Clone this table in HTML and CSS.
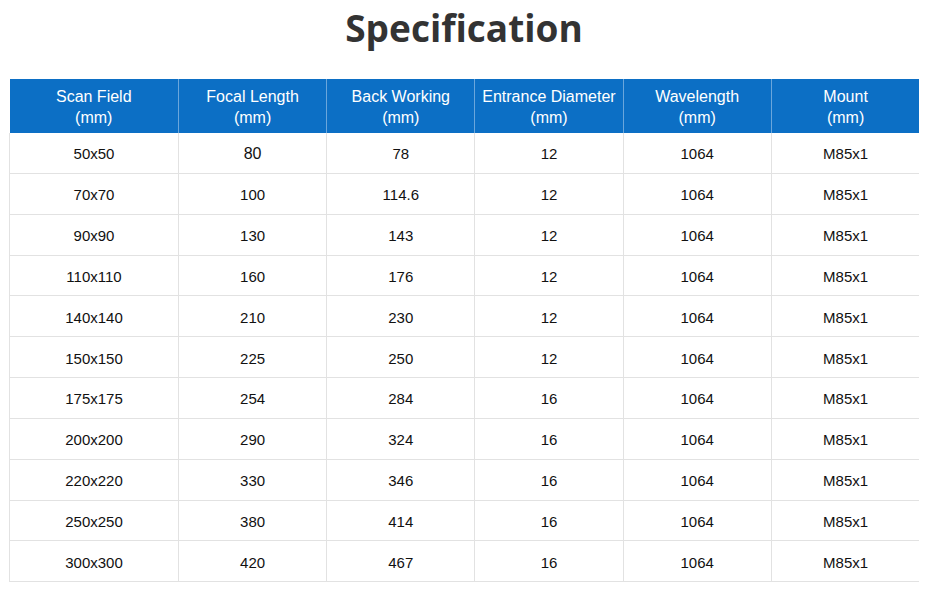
FILE: index.html
```html
<!DOCTYPE html>
<html>
<head>
<meta charset="utf-8">
<link rel="stylesheet" href="styles.css">
</head>
<body>
<div class="page">
  <h1 class="title">Specification</h1>
  <table class="spec">
    <colgroup>
      <col class="c1"><col class="c"><col class="c"><col class="c"><col class="c"><col class="c">
    </colgroup>
    <thead>
      <tr>
        <th>Scan Field<br>(mm)</th>
        <th>Focal Length<br>(mm)</th>
        <th>Back Working<br>(mm)</th>
        <th>Entrance Diameter<br>(mm)</th>
        <th>Wavelength<br>(mm)</th>
        <th>Mount<br>(mm)</th>
      </tr>
    </thead>
    <tbody>
      <tr><td>50x50</td><td class="big">80</td><td>78</td><td>12</td><td>1064</td><td>M85x1</td></tr>
      <tr><td>70x70</td><td>100</td><td>114.6</td><td>12</td><td>1064</td><td>M85x1</td></tr>
      <tr><td>90x90</td><td>130</td><td>143</td><td>12</td><td>1064</td><td>M85x1</td></tr>
      <tr><td>110x110</td><td>160</td><td>176</td><td>12</td><td>1064</td><td>M85x1</td></tr>
      <tr><td>140x140</td><td>210</td><td>230</td><td>12</td><td>1064</td><td>M85x1</td></tr>
      <tr><td>150x150</td><td>225</td><td>250</td><td>12</td><td>1064</td><td>M85x1</td></tr>
      <tr><td>175x175</td><td>254</td><td>284</td><td>16</td><td>1064</td><td>M85x1</td></tr>
      <tr><td>200x200</td><td>290</td><td>324</td><td>16</td><td>1064</td><td>M85x1</td></tr>
      <tr><td>220x220</td><td>330</td><td>346</td><td>16</td><td>1064</td><td>M85x1</td></tr>
      <tr><td>250x250</td><td>380</td><td>414</td><td>16</td><td>1064</td><td>M85x1</td></tr>
      <tr><td>300x300</td><td>420</td><td>467</td><td>16</td><td>1064</td><td>M85x1</td></tr>
    </tbody>
  </table>
</div>
</body>
</html>
```
FILE: styles.css
```css
html, body {
  margin: 0;
  padding: 0;
  background: #fff;
}
.page {
  padding: 0 11px 0 9px;
}
.title {
  margin: 0;
  padding-top: 4px;
  height: 75px;
  font-family: "Open Sans", sans-serif;
  font-weight: 700;
  font-size: 37px;
  line-height: 48px;
  color: #333;
  text-align: center;
}
.spec {
  width: 910px;
  border-collapse: collapse;
  table-layout: fixed;
  font-family: "Liberation Sans", Arial, sans-serif;
}
.c1 { width: 169px; }
.c { width: 148.2px; }
.spec th {
  background: #0c6fc5;
  color: #fff;
  font-weight: 400;
  font-size: 16px;
  line-height: 21px;
  height: 53px;
  padding: 1px 0 0;
  border-left: 1px solid #6aa6dc;
  text-align: center;
  vertical-align: middle;
}
.spec th:first-child { border-left: none; }
.spec td {
  height: 37.85px;
  padding: 2px 0 0;
  font-size: 15px;
  color: #111;
  text-align: center;
  vertical-align: middle;
  border-bottom: 1px solid #e2e2e2;
  border-left: 1px solid #e2e2e2;
}
.spec td.big { font-size: 16px; }
```
